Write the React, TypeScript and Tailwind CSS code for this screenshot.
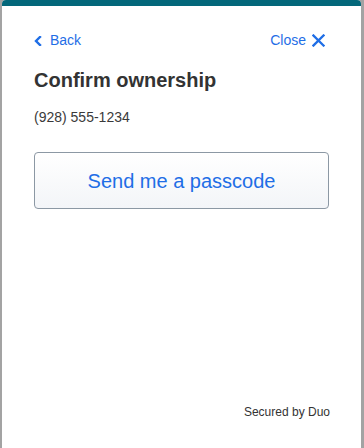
import React from "react";

export default function App() {
  return (
    <div className="w-[364px] h-[448px] bg-[#a3a3a3] pl-[2px] pr-[3px] overflow-hidden" style={{ fontFamily: '"Liberation Sans", Arial, sans-serif' }}>
      <div className="h-[448px] bg-white rounded-t-[4px] flex flex-col overflow-hidden">
        <div className="h-[6px] bg-[#03677a] shrink-0" />
        <div className="flex flex-col px-[32px] pt-[24px] flex-1">
          <div className="flex items-center justify-between h-[20px] text-[14px] text-[#1f6ee6]">
            <button className="flex items-center gap-[8px]">
              <svg width="8" height="10" viewBox="0 0 8 10" className="mt-[1px]">
                <path d="M6 1 L2 5 L6 9" fill="none" stroke="#1f6ee6" strokeWidth="2.4" strokeLinecap="square" strokeLinejoin="miter" />
              </svg>
              <span>Back</span>
            </button>
            <button className="flex items-center gap-[6px] mr-[4px]">
              <span>Close</span>
              <svg width="13" height="13" viewBox="0 0 13 13" className="mt-[1px]">
                <path d="M1.5 1.5 L11.5 11.5 M11.5 1.5 L1.5 11.5" fill="none" stroke="#1f6ee6" strokeWidth="2.3" strokeLinecap="square" />
              </svg>
            </button>
          </div>
          <h1 className="mt-[16px] text-[20px] leading-[28px] font-bold text-[#333333]">Confirm ownership</h1>
          <p className="mt-[13px] text-[14px] leading-[20px] text-[#3a3a3a]">(928) 555-1234</p>
          <button className="mt-[25px] h-[57px] w-full rounded-[4px] border border-[#8c98a4] bg-gradient-to-b from-white to-[#f3f5f8] flex items-center justify-center text-[20px] text-[#1f6ee6]">
            Send me a passcode
          </button>
          <div className="mt-auto pb-[28px] flex justify-end">
            <span className="text-[12px] leading-[16px] text-[#333333] mr-[-1px]">Secured by Duo</span>
          </div>
        </div>
      </div>
    </div>
  );
}
